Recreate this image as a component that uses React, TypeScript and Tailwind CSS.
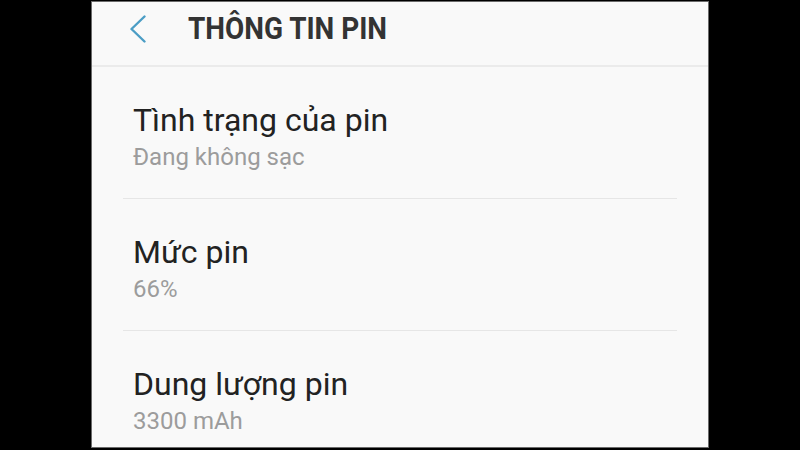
import React from 'react'

const items = [
  { title: 'Tình trạng của pin', value: 'Đang không sạc' },
  { title: 'Mức pin', value: '66%' },
  { title: 'Dung lượng pin', value: '3300 mAh' },
]

export default function App() {
  return (
    <div className="w-[800px] h-[450px] bg-black flex overflow-hidden" style={{ fontFamily: 'Roboto, "Noto Sans", sans-serif' }}>
      <div className="ml-[91px] mt-[1px] w-[618px] h-[447px] border border-[#6b6b6b] bg-[#f9f9f9] flex flex-col">
        {/* Header */}
        <div className="h-[65px] shrink-0 flex items-start border-b-2 border-[#ebebeb]">
          <svg width="20" height="30" viewBox="0 0 20 30" className="ml-[36px] mt-[13px]">
            <path d="M16.5 1.5 L3.5 14 L16.5 26.5" fill="none" stroke="#4b9dc5" strokeWidth="2.4" strokeLinecap="round" strokeLinejoin="round" />
          </svg>
          <h1 className="ml-[40px] mt-[9px] text-[31px] leading-[36px] font-bold text-[#333333] scale-x-[0.9] origin-left whitespace-nowrap">
            THÔNG TIN PIN
          </h1>
        </div>

        {/* Rows */}
        <div className="flex flex-col px-[31px]">
          {items.map((item, i) => (
            <div key={i} className={`h-[132px] flex flex-col pt-[35px] ${i < items.length - 1 ? 'border-b border-[#e6e6e6]' : ''}`}>
              <div className="pl-[10px] text-[32px] leading-[36px] text-[#222222]">{item.title}</div>
              <div className="pl-[10px] mt-[5px] text-[24px] leading-[28px] text-[#9c9c9c]">{item.value}</div>
            </div>
          ))}
        </div>
      </div>
    </div>
  )
}
